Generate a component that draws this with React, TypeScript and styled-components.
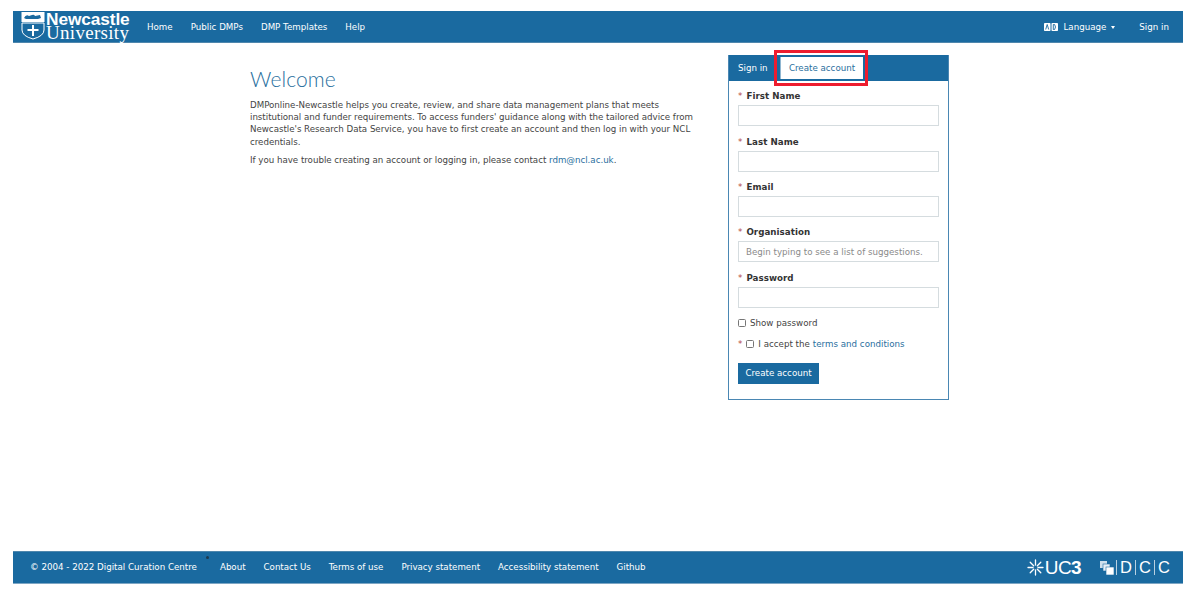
import React from "react";
import styled, { createGlobalStyle } from "styled-components";

const Global = createGlobalStyle`
  html, body { margin: 0; padding: 0; background: #fff; }
  body { font-family: "DejaVu Sans", Verdana, sans-serif; font-size: 8.7px; color: #333; }
  * { box-sizing: border-box; }
  a { color: inherit; text-decoration: none; }
`;

const Page = styled.div`
  width: 1196px;
  height: 595px;
  padding: 11px 13px 11px;
  display: flex;
  flex-direction: column;
  overflow: hidden;
`;

const Bar = styled.header`
  height: 32px;
  background: #1a6aa0;
  border-bottom: 1px solid #4f87ad;
  color: #fff;
  display: flex;
  align-items: center;
  flex: none;
`;

const Logo = styled.div`
  width: 109px;
  height: 31px;
  margin-left: 8px;
  display: flex;
  gap: 1px;
  flex: none;
`;

const LogoWords = styled.div`
  display: flex;
  flex-direction: column;
`;

const LogoTop = styled.span`
  font: bold 17.3px/17px "Liberation Sans", Arial, sans-serif;
  letter-spacing: -0.1px;
`;

const LogoBottom = styled.span`
  font: 19px/16px "Liberation Serif", "Times New Roman", serif;
  letter-spacing: 0.3px;
  margin-top: -3px;
`;

const NavList = styled.nav`
  display: flex;
  gap: 18px;
  margin-left: 17px;
`;

const NavRight = styled.div`
  margin-left: auto;
  display: flex;
  align-items: center;
  padding: 0 14px 0 0;
`;

const LangLink = styled.a`
  display: flex;
  align-items: center;
  gap: 5px;
  margin-right: 24px;
`;

const Caret = styled.span`
  width: 0;
  height: 0;
  margin-top: 1px;
  border-left: 2.5px solid transparent;
  border-right: 2.5px solid transparent;
  border-top: 3px solid #fff;
`;

const Main = styled.main`
  flex: 1;
  display: flex;
  align-items: flex-start;
  padding-left: 237px;
`;

const Intro = styled.section`
  width: 470px;
  margin-right: 8px;
  padding-top: 22px;
  line-height: 12.2px;
`;

const Title = styled.h1`
  margin: 0 0 6px;
  font: 300 21px/28px "Lato", "Open Sans", sans-serif;
  letter-spacing: 0.1px;
  color: #2a6f9e;
`;

const Para = styled.p`
  margin: 0 0 6px;
  color: #444;
  letter-spacing: -0.025px;
`;

const Mail = styled.a`
  color: #2a6f9e;
`;

const Panel = styled.section`
  width: 221px;
  height: 345px;
  margin-top: 12px;
  border: 1px solid #4a87b3;
  border-top: none;
`;

const Tabs = styled.div`
  height: 26px;
  background: #1a6aa0;
  display: flex;
  align-items: flex-end;
  position: relative;
`;

const TabText = styled.span`
  color: #fff;
  padding: 0 0 8px 9px;
  width: 51px;
`;

const ActiveTab = styled.span`
  width: 83px;
  height: 22px;
  margin-bottom: 2px;
  background: #fff;
  color: #2a6f9e;
  display: flex;
  align-items: center;
  justify-content: center;
  border-left: 1px solid #8fb6d1;
  padding-bottom: 1px;
`;

const Highlight = styled.div`
  position: absolute;
  left: 45px;
  top: -5px;
  width: 94px;
  height: 36px;
  border: 3px solid #ed1c2e;
  pointer-events: none;
`;

const Body = styled.form`
  padding: 10.2px 9px 0;
`;

const Field = styled.div`
  height: 45.4px;
`;

const Label = styled.label`
  display: block;
  height: 12px;
  line-height: 11px;
  font-weight: bold;
  color: #333;
  letter-spacing: 0.05px;
  margin-bottom: 2px;
`;

const Star = styled.span`
  color: #b4463f;
  font-weight: normal;
  margin-right: 4px;
`;

const Input = styled.div`
  height: 21px;
  border: 1px solid #d5dcdf;
  background: #fff;
  color: #8a8a8a;
  padding-left: 7px;
  line-height: 20px;
`;

const CheckRow = styled.div<{ $top: number }>`
  display: flex;
  align-items: center;
  height: 12px;
  margin-top: ${(p) => p.$top}px;
  color: #444;
`;

const Box = styled.span`
  width: 8px;
  height: 8px;
  border: 1px solid #767676;
  border-radius: 1.5px;
  background: #fff;
  margin-right: 4px;
  flex: none;
`;

const Terms = styled.a`
  color: #2a6f9e;
  margin-left: 3px;
`;

const Submit = styled.div`
  width: 81px;
  height: 21px;
  margin-top: 12.5px;
  background: #1a6aa0;
  color: #fff;
  display: flex;
  align-items: center;
  justify-content: center;
`;

const Footer = styled.footer`
  height: 33px;
  padding-bottom: 2px;
  background: #1a6aa0;
  border-top: 1px solid #4f87ad;
  border-bottom: 1px solid #7da6c4;
  color: #fff;
  display: flex;
  align-items: center;
  flex: none;
  position: relative;
`;

const Copy = styled.span`
  margin-left: 17px;
  margin-right: 23px;
`;

const FootLinks = styled.nav`
  display: flex;
  gap: 18px;
  letter-spacing: -0.02px;
`;

const Dot = styled.span`
  position: absolute;
  left: 193px;
  top: 4px;
  width: 3px;
  height: 3px;
  border-radius: 50%;
  background: #1d3a4e;
`;

const Marks = styled.div`
  margin-left: auto;
  margin-right: 10px;
  display: flex;
  align-items: center;
  padding-top: 2px;
`;

const Uc3 = styled.span`
  display: flex;
  align-items: center;
  font: 300 19px/20px "Liberation Sans", Arial, sans-serif;
  letter-spacing: -0.6px;
  margin-right: 19px;
`;

const Uc3Bold = styled.b`
  font-weight: bold;
`;

const Dcc = styled.span`
  display: flex;
  align-items: center;
  font: 16.5px/20px "Liberation Sans", Arial, sans-serif;
`;

const DccLetter = styled.span`
  width: 19px;
  height: 15px;
  line-height: 15px;
  text-align: center;
  border-left: 1px solid #b9d1e2;
`;

const LogoShield = () => (
  <svg width="24" height="31" viewBox="0 0 24 31" style={{ flex: "none" }}>
    <rect x="0.5" y="1" width="23" height="10" fill="#fff" />
    <path d="M3 7 q2-4 5-2 l3-1 q2-1 3 1 l5-1 1 3 -3 1 h-12z" fill="#1a6aa0" />
    <path d="M1 12 H23 V19 Q23 25 12 28 Q1 25 1 19 Z" fill="none" stroke="#fff" strokeWidth="1" />
    <path d="M12 14 V25 M6.5 19 H17.5" stroke="#fff" strokeWidth="2" />
  </svg>
);

const LanguageIcon = () => (
  <svg width="14" height="8" viewBox="0 0 14 8" style={{ flex: "none" }}>
    <rect width="6.5" height="8" rx="0.8" fill="#fff" />
    <rect x="7.5" width="6.5" height="8" rx="0.8" fill="#fff" />
    <path d="M1.7 6.5 3.2 1.5 4.7 6.5 M9.3 1.5 H10.6 Q12.4 4 10.6 6.5 H9.3 Z" fill="none" stroke="#1a6aa0" strokeWidth="0.9" />
  </svg>
);

const Asterisk = () => (
  <svg width="17" height="17" viewBox="0 0 17 17" style={{ flex: "none", marginRight: 1 }}>
    <g stroke="#fff" strokeWidth="1.3" strokeLinecap="round">
      <path d="M8.5 1 V6 M8.5 11 V16 M1 8.5 H6 M11 8.5 H16 M3.2 3.2 6.7 6.7 M10.3 10.3 13.8 13.8 M13.8 3.2 10.3 6.7 M6.7 10.3 3.2 13.8" />
    </g>
  </svg>
);

const DccSquares = () => (
  <svg width="14" height="14" viewBox="0 0 14 14" style={{ flex: "none", marginRight: 2 }}>
    <rect x="0" y="0" width="7" height="7" fill="#cfe0ec" />
    <rect x="3" y="3" width="7" height="7" fill="#e8f0f6" stroke="#1a6aa0" strokeWidth="0.6" />
    <rect x="6" y="6" width="8" height="8" fill="#fff" stroke="#1a6aa0" strokeWidth="0.6" />
  </svg>
);

const fields = [
  { label: "First Name" },
  { label: "Last Name" },
  { label: "Email" },
  { label: "Organisation", placeholder: "Begin typing to see a list of suggestions." },
  { label: "Password" },
];

export default function App() {
  return (
    <>
      <Global />
      <Page>
        <Bar>
          <Logo>
            <LogoShield />
            <LogoWords>
              <LogoTop>Newcastle</LogoTop>
              <LogoBottom>University</LogoBottom>
            </LogoWords>
          </Logo>
          <NavList>
            <a>Home</a>
            <a>Public DMPs</a>
            <a>DMP Templates</a>
            <a>Help</a>
          </NavList>
          <NavRight>
            <LangLink>
              <LanguageIcon />
              <span>Language</span>
              <Caret />
            </LangLink>
            <a>Sign in</a>
          </NavRight>
        </Bar>
        <Main>
          <Intro>
            <Title>Welcome</Title>
            <Para>
              DMPonline-Newcastle helps you create, review, and share data management plans that meets
              <br />
              institutional and funder requirements. To access funders' guidance along with the tailored advice from
              <br />
              Newcastle's Research Data Service, you have to first create an account and then log in with your NCL
              <br />
              credentials.
            </Para>
            <Para>
              If you have trouble creating an account or logging in, please contact <Mail>rdm@ncl.ac.uk</Mail>.
            </Para>
          </Intro>
          <Panel>
            <Tabs>
              <TabText>Sign in</TabText>
              <ActiveTab>Create account</ActiveTab>
              <Highlight />
            </Tabs>
            <Body>
              {fields.map((f) => (
                <Field key={f.label}>
                  <Label>
                    <Star>*</Star>
                    {f.label}
                  </Label>
                  <Input>{f.placeholder}</Input>
                </Field>
              ))}
              <CheckRow $top={-1}>
                <Box />
                Show password
              </CheckRow>
              <CheckRow $top={9}>
                <Star>*</Star>
                <Box />
                I accept the<Terms>terms and conditions</Terms>
              </CheckRow>
              <Submit>Create account</Submit>
            </Body>
          </Panel>
        </Main>
        <Footer>
          <Copy>© 2004 - 2022 Digital Curation Centre</Copy>
          <Dot />
          <FootLinks>
            <a>About</a>
            <a>Contact Us</a>
            <a>Terms of use</a>
            <a>Privacy statement</a>
            <a>Accessibility statement</a>
            <a>Github</a>
          </FootLinks>
          <Marks>
            <Uc3>
              <Asterisk />
              UC<Uc3Bold>3</Uc3Bold>
            </Uc3>
            <Dcc>
              <DccSquares />
              <DccLetter>D</DccLetter>
              <DccLetter>C</DccLetter>
              <DccLetter>C</DccLetter>
            </Dcc>
          </Marks>
        </Footer>
      </Page>
    </>
  );
}
